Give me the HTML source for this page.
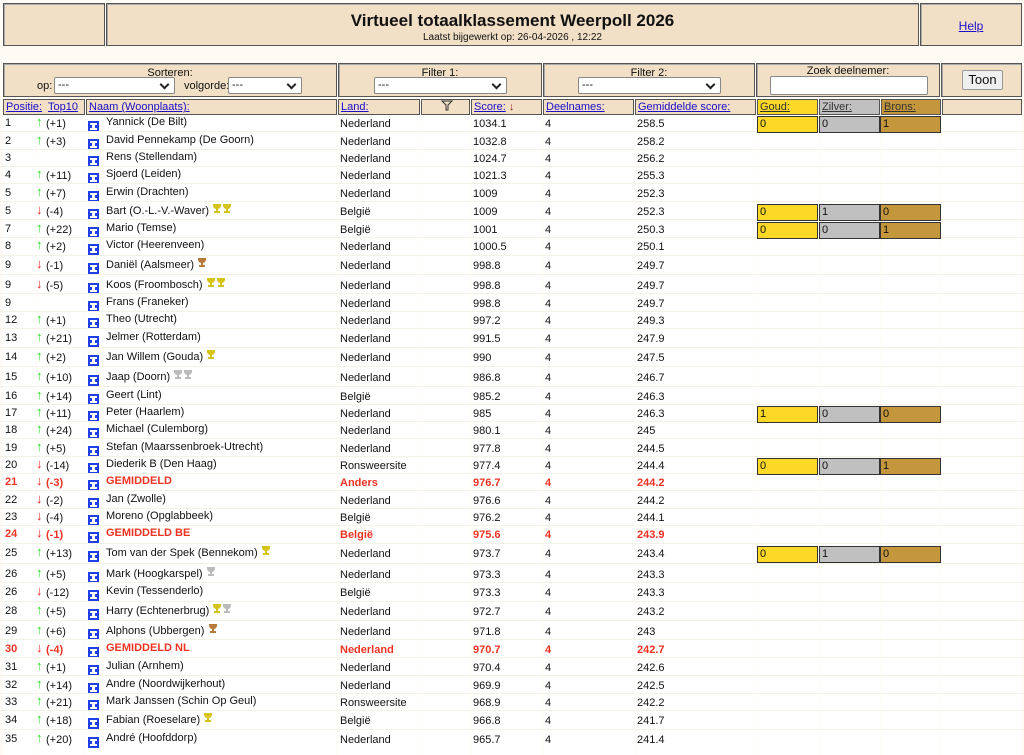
<!DOCTYPE html>
<html><head><meta charset="utf-8">
<style>
*{box-sizing:border-box}
body{margin:0;background:#fdfbf4;font-family:"Liberation Sans",Arial,sans-serif;font-size:11px;color:#111;width:1024px;height:748px;overflow:hidden;position:relative}
.box{position:absolute;background:#f1dfc6;border:1px solid #555;box-shadow:inset 1px 1px 0 #aaa}
a{color:#1a0dcc;text-decoration:underline}
.sel{position:absolute;height:17px;background:#fff;border:1px solid #888;border-radius:2px;font-size:11px;padding:1px 3px}
.sel:after{content:"";position:absolute;right:6px;top:3px;width:5px;height:5px;border-right:2px solid #222;border-bottom:2px solid #222;transform:rotate(45deg)}
.hc{position:absolute;top:99px;height:16px;background:#f1dfc6;border:1px solid #555;line-height:14px;padding-left:2px;white-space:nowrap;overflow:hidden}
.col{position:absolute;top:115px;height:640px;background:#fff}
.hl{position:absolute;left:0;width:1024px;height:1px;background:#f4f1e6}
.t{position:absolute;white-space:nowrap;line-height:14px}
.red{color:#ee3322;font-weight:bold}
.ic{position:absolute;width:11px;height:11px;background:#1f3fe8}
.ic:before{content:"";position:absolute;left:2px;top:2px;width:7px;height:2px;background:#fff;box-shadow:0 5px 0 #fff}
.ic:after{content:"";position:absolute;left:4px;top:3px;width:3px;height:5px;background:#fff}
.m{position:absolute;width:61px;height:17px;border:1px solid #333;line-height:15px;padding-left:2px;z-index:2}
.g{background:#fcd827}.s{background:#c0c0c0}.b{background:#c4973c}
.up{color:#22dd22}.dn{color:#ee2222}
</style></head><body>
<div class="box" style="left:3px;top:3px;width:102px;height:43px"></div>
<div class="box" style="left:106px;top:3px;width:813px;height:43px;text-align:center">
<div style="font-size:17px;font-weight:bold;margin-top:7px">Virtueel totaalklassement Weerpoll 2026</div>
<div style="font-size:10px;margin-top:1px">Laatst bijgewerkt op: 26-04-2026 , 12:22</div></div>
<div class="box" style="left:920px;top:3px;width:102px;height:43px;text-align:center;padding-top:15px;font-size:12px"><a>Help</a></div>

<div class="box" style="left:3px;top:63px;width:334px;height:34px;text-align:center;padding-top:3px">Sorteren:</div>
<span style="position:absolute;left:37px;top:80px">op:</span><div class="sel" style="left:54px;top:77px;width:121px">---</div>
<span style="position:absolute;left:184px;top:80px">volgorde:</span><div class="sel" style="left:228px;top:77px;width:74px">---</div>
<div class="box" style="left:338px;top:63px;width:204px;height:34px;text-align:center;padding-top:3px">Filter 1:</div>
<div class="sel" style="left:374px;top:77px;width:133px">---</div>
<div class="box" style="left:543px;top:63px;width:212px;height:34px;text-align:center;padding-top:3px">Filter 2:</div>
<div class="sel" style="left:578px;top:77px;width:143px">---</div>
<div class="box" style="left:756px;top:63px;width:184px;height:34px;text-align:center;padding-top:1px">Zoek deelnemer:</div>
<div style="position:absolute;left:770px;top:76px;width:158px;height:19px;background:#fff;border:1px solid #888;border-radius:2px"></div>
<div class="box" style="left:941px;top:63px;width:81px;height:34px"></div>
<div style="position:absolute;left:962px;top:70px;width:41px;height:20px;background:#efefef;border:1px solid #999;border-radius:2px;text-align:center;font-size:13px;line-height:18px">Toon</div>

<div class="hc" style="left:3px;width:82px"><a>Positie:</a>&nbsp; <a>Top10</a></div>
<div class="hc" style="left:86px;width:251px"><a>Naam (Woonplaats):</a></div>
<div class="hc" style="left:338px;width:82px"><a>Land:</a></div>
<div class="hc" style="left:421px;width:49px;text-align:center"><svg width="12" height="11" viewBox="0 0 12 11"><path d="M1 1h10L7 5v5H5V5z" fill="none" stroke="#333"/></svg></div>
<div class="hc" style="left:471px;width:71px"><a>Score:</a> <span style="color:#8b1a1a;font-weight:bold">&#8595;</span></div>
<div class="hc" style="left:543px;width:91px"><a>Deelnames:</a></div>
<div class="hc" style="left:635px;width:121px"><a>Gemiddelde score:</a></div>
<div class="hc g" style="left:757px;width:61px"><a style="color:#333">Goud:</a></div>
<div class="hc s" style="left:819px;width:61px"><a style="color:#333">Zilver:</a></div>
<div class="hc b" style="left:881px;width:60px"><a style="color:#333">Brons:</a></div>
<div class="hc" style="left:942px;width:80px"></div>

<div class="col" style="left:3px;width:33px"></div>
<div class="col" style="left:37px;width:48px"></div>
<div class="col" style="left:86px;width:251px"></div>
<div class="col" style="left:338px;width:82px"></div>
<div class="col" style="left:421px;width:49px"></div>
<div class="col" style="left:471px;width:71px"></div>
<div class="col" style="left:543px;width:91px"></div>
<div class="col" style="left:635px;width:121px"></div>
<div class="col" style="left:757px;width:61px"></div>
<div class="col" style="left:819px;width:61px"></div>
<div class="col" style="left:881px;width:60px"></div>
<div class="col" style="left:942px;width:80px"></div>
<div id="rows"></div>
<script>
var G='<svg width="10" height="11" viewBox="0 0 10 11"><path d="M1 1h8v2a4 4 0 0 1-3 3v2h2v2H2V8h2V6a4 4 0 0 1-3-3z" fill="#d6c31a"/></svg>';
var S=G.replace('#d6c31a','#bbb');
var B=G.replace('#d6c31a','#b87a3a');
var T={g:G,s:S,b:B};
var C=[123,141,158,175,193,211,229,246,265,285,303,320,338,357,377,396,413,430,448,465,482,500,517,534,553,574,592,611,631,649,667,685,702,720,739];
var R=[
[1,'+1','Yannick (De Bilt)','','Nederland','1034.1','258.5',[0,0,1]],
[2,'+3','David Pennekamp (De Goorn)','','Nederland','1032.8','258.2',0],
[3,'','Rens (Stellendam)','','Nederland','1024.7','256.2',0],
[4,'+11','Sjoerd (Leiden)','','Nederland','1021.3','255.3',0],
[5,'+7','Erwin (Drachten)','','Nederland','1009','252.3',0],
[5,'-4','Bart (O.-L.-V.-Waver)','gg','België','1009','252.3',[0,1,0]],
[7,'+22','Mario (Temse)','','België','1001','250.3',[0,0,1]],
[8,'+2','Victor (Heerenveen)','','Nederland','1000.5','250.1',0],
[9,'-1','Daniël (Aalsmeer)','b','Nederland','998.8','249.7',0],
[9,'-5','Koos (Froombosch)','gg','Nederland','998.8','249.7',0],
[9,'','Frans (Franeker)','','Nederland','998.8','249.7',0],
[12,'+1','Theo (Utrecht)','','Nederland','997.2','249.3',0],
[13,'+21','Jelmer (Rotterdam)','','Nederland','991.5','247.9',0],
[14,'+2','Jan Willem (Gouda)','g','Nederland','990','247.5',0],
[15,'+10','Jaap (Doorn)','ss','Nederland','986.8','246.7',0],
[16,'+14','Geert (Lint)','','België','985.2','246.3',0],
[17,'+11','Peter (Haarlem)','','Nederland','985','246.3',[1,0,0]],
[18,'+24','Michael (Culemborg)','','Nederland','980.1','245',0],
[19,'+5','Stefan (Maarssenbroek-Utrecht)','','Nederland','977.8','244.5',0],
[20,'-14','Diederik B (Den Haag)','','Ronsweersite','977.4','244.4',[0,0,1]],
[21,'-3','GEMIDDELD','','Anders','976.7','244.2','r'],
[22,'-2','Jan (Zwolle)','','Nederland','976.6','244.2',0],
[23,'-4','Moreno (Opglabbeek)','','België','976.2','244.1',0],
[24,'-1','GEMIDDELD BE','','België','975.6','243.9','r'],
[25,'+13','Tom van der Spek (Bennekom)','g','Nederland','973.7','243.4',[0,1,0]],
[26,'+5','Mark (Hoogkarspel)','s','Nederland','973.3','243.3',0],
[26,'-12','Kevin (Tessenderlo)','','België','973.3','243.3',0],
[28,'+5','Harry (Echtenerbrug)','gs','Nederland','972.7','243.2',0],
[29,'+6','Alphons (Ubbergen)','b','Nederland','971.8','243',0],
[30,'-4','GEMIDDELD NL','','Nederland','970.7','242.7','r'],
[31,'+1','Julian (Arnhem)','','Nederland','970.4','242.6',0],
[32,'+14','Andre (Noordwijkerhout)','','Nederland','969.9','242.5',0],
[33,'+21','Mark Janssen (Schin Op Geul)','','Ronsweersite','968.9','242.2',0],
[34,'+18','Fabian (Roeselare)','g','België','966.8','241.7',0],
[35,'+20','André (Hoofddorp)','','Nederland','965.7','241.4',0]];
var h='';
R.forEach(function(r,i){
 var c=C[i],y=c-7,rc=r[7]=='r'?' red':'';
 if(i>0)h+='<div class="hl" style="top:'+Math.round((C[i-1]+c)/2-1)+'px"></div>';
 h+='<div class="t'+rc+'" style="left:5px;top:'+y+'px">'+r[0]+'</div>';
 if(r[1]){var up=r[1][0]=='+';h+='<div class="t '+(up?'up':'dn')+'" style="left:36px;top:'+(y-1)+'px;font-size:13px">'+(up?'&#8593;':'&#8595;')+'</div><div class="t'+rc+'" style="left:46px;top:'+(y+1)+'px">('+r[1]+')</div>';}
 h+='<div class="ic" style="left:88px;top:'+(c-2)+'px"></div>';
 var tr='';for(var k=0;k<r[3].length;k++)tr+=T[r[3][k]];
 h+='<div class="t'+rc+'" style="left:106px;top:'+(y-1)+'px">'+r[2]+' '+tr+'</div>';
 h+='<div class="t'+rc+'" style="left:340px;top:'+(y+1)+'px">'+r[4]+'</div>';
 h+='<div class="t'+rc+'" style="left:473px;top:'+(y+1)+'px">'+r[5]+'</div>';
 h+='<div class="t'+rc+'" style="left:545px;top:'+(y+1)+'px">4</div>';
 h+='<div class="t'+rc+'" style="left:637px;top:'+(y+1)+'px">'+r[6]+'</div>';
 var m=r[7];
 if(m&&m!='r')h+='<div class="m g" style="left:757px;top:'+(c-7)+'px">'+m[0]+'</div><div class="m s" style="left:819px;top:'+(c-7)+'px">'+m[1]+'</div><div class="m b" style="left:880px;top:'+(c-7)+'px">'+m[2]+'</div>';
});
document.getElementById('rows').innerHTML=h;
</script>
</body></html>
